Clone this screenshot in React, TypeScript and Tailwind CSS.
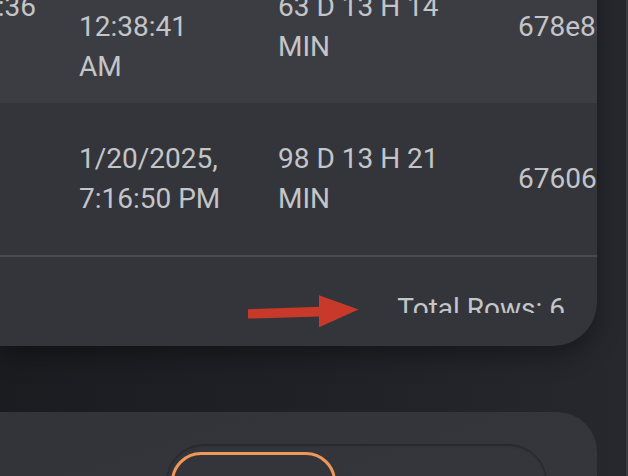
// Session log table footer + the next panel below it (cropped view).

const rows = [
  {
    created: ["1/13/2025, 3:02:36", "AM"],
    updated: "1/13/2025, 12:38:41 AM",
    uptime: "63 D 13 H 14 MIN",
    id: "678e8c2f1a9b4d0e",
    tone: "bg-[#3c3d42]",
  },
  {
    created: ["1/20/2025"],
    updated: "1/20/2025, 7:16:50 PM",
    uptime: "98 D 13 H 21 MIN",
    id: "67606a1d3f2c8b7e",
    tone: "bg-[#33353b]",
  },
];

function TableRow({ row }: { row: (typeof rows)[number] }) {
  return (
    <div className={`flex h-[152px] shrink-0 items-center ${row.tone}`}>
      {/* first column is mostly off-screen to the left */}
      <div className="w-[281px] shrink-0 pr-[20px]">
        {row.created.map((line) => (
          <div key={line}>{line}</div>
        ))}
      </div>
      <div className="w-[199px] shrink-0 pr-[51px]">{row.updated}</div>
      <div className="w-[240px] shrink-0 pr-[40px]">{row.uptime}</div>
      <div className="whitespace-nowrap">{row.id}</div>
    </div>
  );
}

function Arrow() {
  return (
    <svg
      className="pointer-events-none absolute left-0 top-0"
      width="628"
      height="89"
      viewBox="0 0 628 89"
    >
      <polygon points="248,52.3 320,49.8 320,59.6 248,61.6" fill="#c9392a" />
      <polygon points="319,38.3 358.5,52.6 319,70.3" fill="#c9392a" />
    </svg>
  );
}

export default function App() {
  return (
    <div className="flex h-[476px] w-[628px] overflow-hidden bg-gradient-to-r from-[#1b1c20] via-[#202126] to-[#27282e] font-[Roboto,sans-serif] text-[28px] leading-[40px] text-[#c4c5c9]">
      <div className="flex min-w-0 flex-1 flex-col pr-[29px]">
        {/* Results card */}
        <div className="-mt-[49px] flex shrink-0 flex-col overflow-hidden rounded-br-[44px] bg-[#33353b] shadow-[0_10px_24px_rgba(0,0,0,0.35)]">
          <div className="-ml-[202px] flex flex-col">
            {rows.map((row) => (
              <TableRow key={row.id} row={row} />
            ))}
          </div>
          <div className="h-[2px] shrink-0 bg-[#4a4b50]" />
          <div className="relative flex h-[89px] shrink-0 justify-end pr-8 pt-[32px]">
            <Arrow />
            <div className="h-[24px] overflow-hidden whitespace-nowrap">
              Total Rows: 6
            </div>
          </div>
        </div>

        {/* Next panel */}
        <div className="mt-[66px] flex h-[200px] shrink-0 flex-col rounded-tr-[40px] bg-gradient-to-br from-[#323439] to-[#35373d] pt-[32px]">
          <div className="ml-[166px] flex h-[120px] w-[381px] rounded-[38px] border border-[#27282d] pl-[4px] pt-[7px] shadow-[inset_0_1px_2px_rgba(0,0,0,0.25)]">
            <div className="h-[90px] w-[165px] rounded-[30px] border-[3px] border-[#f0975a]" />
          </div>
        </div>
      </div>
      <div className="w-[2px] shrink-0 bg-[#3b3c41]" />
    </div>
  );
}
